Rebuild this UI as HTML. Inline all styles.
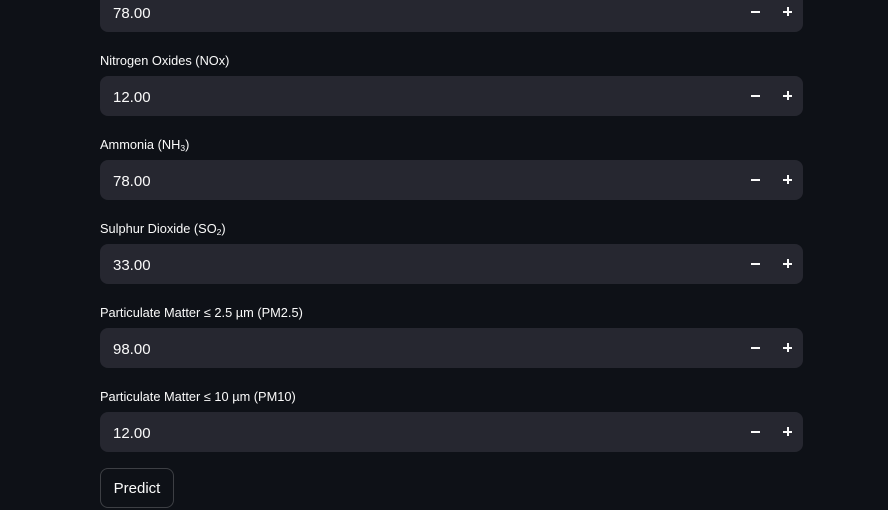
<!DOCTYPE html><html><head><style>
body{margin:0;background:#0e1117;width:888px;height:510px;overflow:hidden;font-family:"Liberation Sans",sans-serif;color:#fafafa;position:relative}
.in{position:absolute;left:100px;width:703px;height:40px;background:#262730;border-radius:8px}
.in span.v{position:absolute;left:13px;top:2px;line-height:40px;font-size:15px}
.m{position:absolute;left:651px;top:19px;width:9px;height:2px;background:#fafafa}
.p{position:absolute;left:683px;top:15px;width:9px;height:9px}
.p:before{content:"";position:absolute;left:0;top:3.5px;width:9px;height:2px;background:#fafafa}
.p:after{content:"";position:absolute;left:3.5px;top:0;width:2px;height:9px;background:#fafafa}
.l{position:absolute;left:100px;font-size:12.8px;line-height:16px;top:0}
sub{font-size:8.5px;vertical-align:-2px}
.b{position:absolute;left:100px;top:468px;width:72px;height:38px;border:1px solid rgba(250,250,250,0.2);border-radius:8px;font-size:15px;line-height:40px;text-align:center}
</style></head><body>
<div class="in" style="top:-8px"><span class="v">78.00</span><i class="m"></i><i class="p"></i></div>
<div class="l" style="top:53px">Nitrogen Oxides (NOx)</div>
<div class="in" style="top:76px"><span class="v">12.00</span><i class="m"></i><i class="p"></i></div>
<div class="l" style="top:137px">Ammonia (NH<sub>3</sub>)</div>
<div class="in" style="top:160px"><span class="v">78.00</span><i class="m"></i><i class="p"></i></div>
<div class="l" style="top:221px">Sulphur Dioxide (SO<sub>2</sub>)</div>
<div class="in" style="top:244px"><span class="v">33.00</span><i class="m"></i><i class="p"></i></div>
<div class="l" style="top:305px">Particulate Matter ≤ 2.5 µm (PM2.5)</div>
<div class="in" style="top:328px"><span class="v">98.00</span><i class="m"></i><i class="p"></i></div>
<div class="l" style="top:389px">Particulate Matter ≤ 10 µm (PM10)</div>
<div class="in" style="top:412px"><span class="v">12.00</span><i class="m"></i><i class="p"></i></div>
<div class="b">Predict</div>
</body></html>
